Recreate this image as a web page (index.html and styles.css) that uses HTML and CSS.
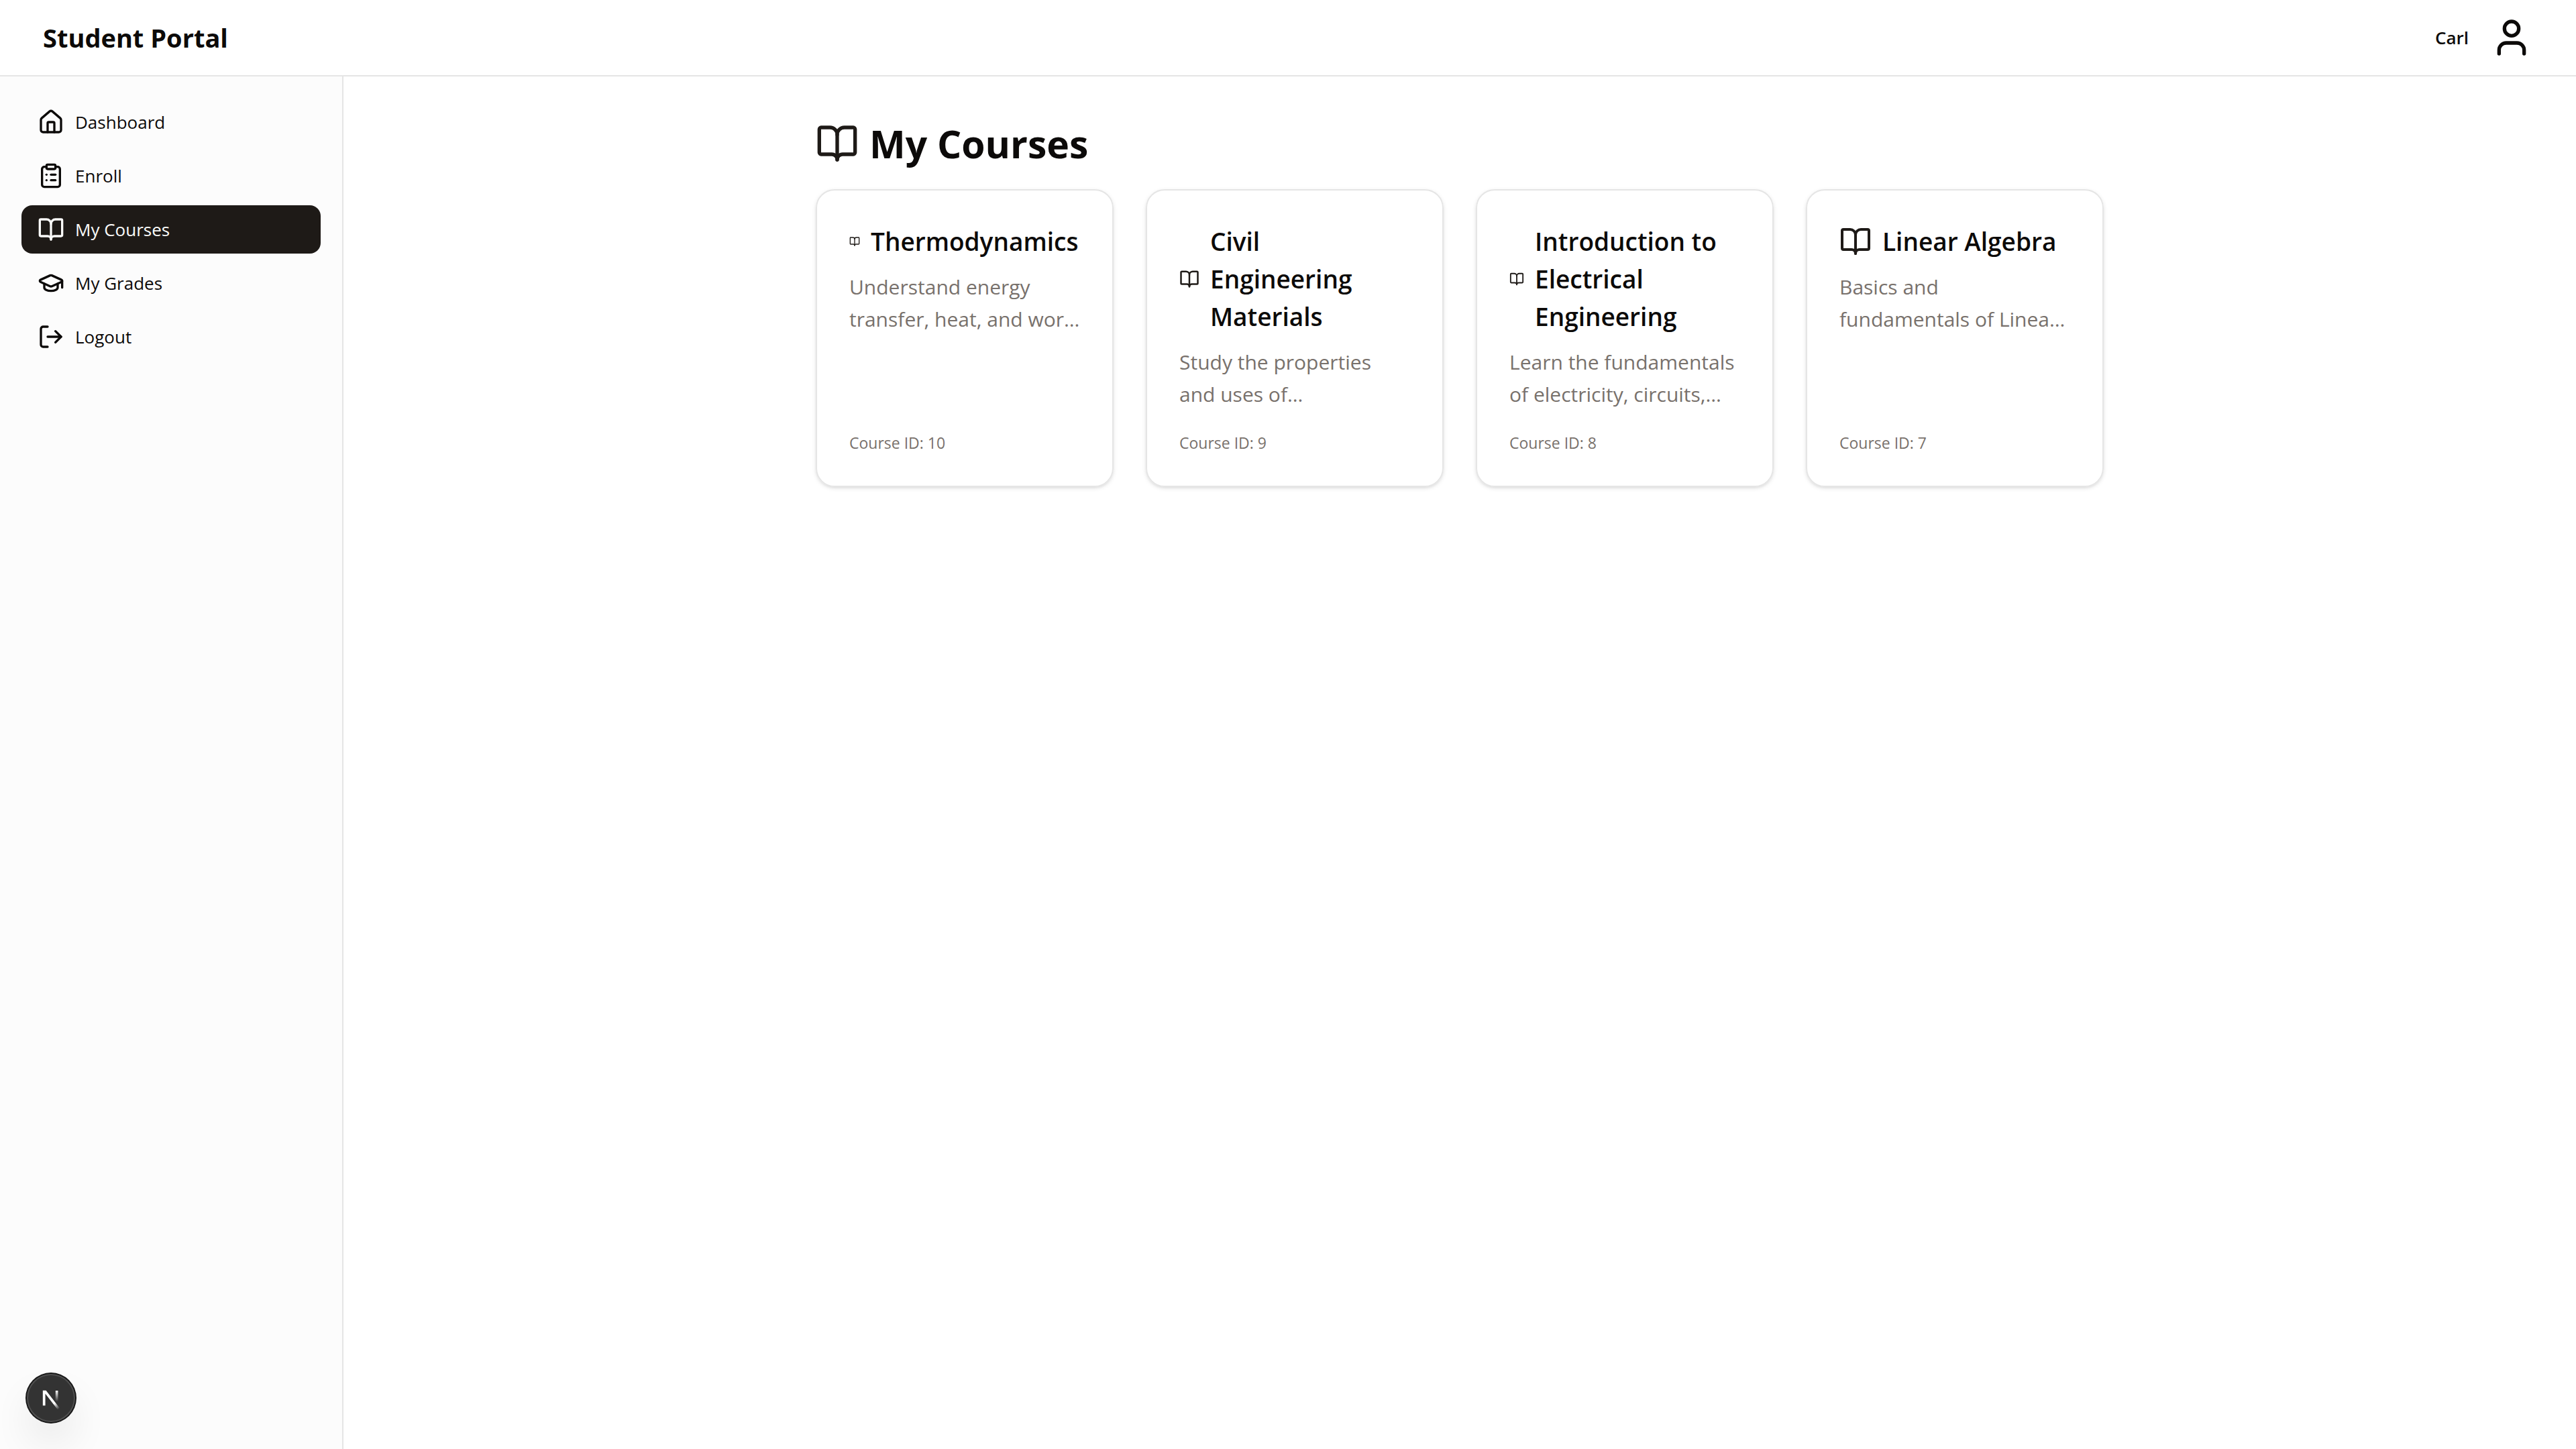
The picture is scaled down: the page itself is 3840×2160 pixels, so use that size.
FILE: index.html
```html
<!DOCTYPE html>
<html lang="en">
<head>
<meta charset="utf-8">
<meta name="viewport" content="width=device-width, initial-scale=1">
<title>Student Portal</title>
<link rel="stylesheet" href="styles.css">
</head>
<body>
<svg class="sprite" aria-hidden="true">
  <symbol id="book-open" viewBox="0 0 24 24"><path d="M12 7v14"/><path d="M3 18a1 1 0 0 1-1-1V4a1 1 0 0 1 1-1h5a4 4 0 0 1 4 4 4 4 0 0 1 4-4h5a1 1 0 0 1 1 1v13a1 1 0 0 1-1 1h-6a3 3 0 0 0-3 3 3 3 0 0 0-3-3z"/></symbol>
  <symbol id="house" viewBox="0 0 24 24"><path d="M15 21v-8a1 1 0 0 0-1-1h-4a1 1 0 0 0-1 1v8"/><path d="M3 10a2 2 0 0 1 .709-1.528l7-5.999a2 2 0 0 1 2.582 0l7 5.999A2 2 0 0 1 21 10v9a2 2 0 0 1-2 2H5a2 2 0 0 1-2-2z"/></symbol>
  <symbol id="clipboard-list" viewBox="0 0 24 24"><rect width="8" height="4" x="8" y="2" rx="1" ry="1"/><path d="M16 4h2a2 2 0 0 1 2 2v14a2 2 0 0 1-2 2H6a2 2 0 0 1-2-2V6a2 2 0 0 1 2-2h2"/><path d="M12 11h4"/><path d="M12 16h4"/><path d="M8 11h.01"/><path d="M8 16h.01"/></symbol>
  <symbol id="graduation-cap" viewBox="0 0 24 24"><path d="M21.42 10.922a1 1 0 0 0-.019-1.838L12.83 5.18a2 2 0 0 0-1.66 0L2.6 9.08a1 1 0 0 0 0 1.832l8.57 3.908a2 2 0 0 0 1.66 0z"/><path d="M22 10v6"/><path d="M6 12.5V16a6 3 0 0 0 12 0v-3.5"/></symbol>
  <symbol id="log-out" viewBox="0 0 24 24"><path d="M9 21H5a2 2 0 0 1-2-2V5a2 2 0 0 1 2-2h4"/><path d="m16 17 5-5-5-5"/><path d="M21 12H9"/></symbol>
  <symbol id="user" viewBox="0 0 24 24"><path d="M19 21v-2a4 4 0 0 0-4-4H9a4 4 0 0 0-4 4v2"/><circle cx="12" cy="7" r="4"/></symbol>
</svg>

<header class="topbar">
  <div class="brand">Student Portal</div>
  <div class="account">
    <span class="account-name">Carl</span>
    <svg class="icon icon-xl" aria-hidden="true"><use href="#user"/></svg>
  </div>
</header>

<div class="shell">
  <nav class="sidebar" aria-label="Main">
    <a class="nav-link" href="#dashboard"><svg class="icon icon-md" aria-hidden="true"><use href="#house"/></svg>Dashboard</a>
    <a class="nav-link" href="#enroll"><svg class="icon icon-md" aria-hidden="true"><use href="#clipboard-list"/></svg>Enroll</a>
    <a class="nav-link active" href="#courses" aria-current="page"><svg class="icon icon-md" aria-hidden="true"><use href="#book-open"/></svg>My Courses</a>
    <a class="nav-link" href="#grades"><svg class="icon icon-md" aria-hidden="true"><use href="#graduation-cap"/></svg>My Grades</a>
    <a class="nav-link" href="#logout"><svg class="icon icon-md" aria-hidden="true"><use href="#log-out"/></svg>Logout</a>
  </nav>

  <main class="content">
    <div class="container">
      <h1 class="page-title"><svg class="icon icon-xl" aria-hidden="true"><use href="#book-open"/></svg>My Courses</h1>
      <div class="course-grid">
        <article class="card">
          <h2 class="card-title"><svg class="icon icon-2xs" aria-hidden="true"><use href="#book-open"/></svg><span>Thermodynamics</span></h2>
          <p class="card-text">Understand energy<br>transfer, heat, and wor…</p>
          <p class="card-id">Course ID: 10</p>
        </article>
        <article class="card">
          <h2 class="card-title"><svg class="icon icon-sm" aria-hidden="true"><use href="#book-open"/></svg><span>Civil<br>Engineering Materials</span></h2>
          <p class="card-text">Study the properties<br>and uses of…</p>
          <p class="card-id">Course ID: 9</p>
        </article>
        <article class="card">
          <h2 class="card-title"><svg class="icon icon-xs" aria-hidden="true"><use href="#book-open"/></svg><span>Introduction to Electrical Engineering</span></h2>
          <p class="card-text">Learn the fundamentals<br>of electricity, circuits,…</p>
          <p class="card-id">Course ID: 8</p>
        </article>
        <article class="card">
          <h2 class="card-title"><svg class="icon icon-lg" aria-hidden="true"><use href="#book-open"/></svg><span>Linear Algebra</span></h2>
          <p class="card-text">Basics and<br>fundamentals of Linea…</p>
          <p class="card-id">Course ID: 7</p>
        </article>
      </div>
    </div>
  </main>
</div>

<button class="dev-badge" type="button" aria-label="Open developer tools">
  <svg class="dev-mark" viewBox="0 0 40 40" fill="none" aria-hidden="true">
    <defs>
      <linearGradient id="diagonal-fade" gradientUnits="userSpaceOnUse" x1="9.956" y1="11.123" x2="15.478" y2="17.967"><stop stop-color="#fff"/><stop offset=".604" stop-color="#fff" stop-opacity="0"/><stop offset="1" stop-color="#fff" stop-opacity="0"/></linearGradient>
      <linearGradient id="stem-fade" gradientUnits="userSpaceOnUse" x1="11.822" y1="1.4" x2="11.791" y2="9.625"><stop stop-color="#fff"/><stop offset="1" stop-color="#fff" stop-opacity="0"/></linearGradient>
      <clipPath id="mark-clip"><rect x="0" y="1.4" width="16" height="16"/></clipPath>
    </defs>
    <g transform="translate(12.5 13)" stroke-width="1.86">
      <path d="M13.3 15.2 2.34 1v11.6" stroke="url(#diagonal-fade)" clip-path="url(#mark-clip)"/>
      <path d="M11.825 1.5v11.6" stroke="url(#stem-fade)"/>
    </g>
  </svg>
</button>
</body>
</html>
```
FILE: styles.css
```css
:root {
  --foreground: #0c0a09;
  --primary: #1e1a17;
  --primary-foreground: #fafaf9;
  --muted: #78716c;
  --border: #e5e5e5;
  --sidebar: #fcfcfc;
}

* { box-sizing: border-box; }

body {
  margin: 0;
  min-height: 100vh;
  display: flex;
  flex-direction: column;
  background: #fff;
  color: var(--foreground);
  font-family: "Open Sans", "Noto Sans", sans-serif;
  font-size: 26px;
  line-height: 40px;
}

h1, h2, p { margin: 0; }

.sprite { display: none; }

.icon {
  flex: none;
  fill: none;
  stroke: currentColor;
  stroke-width: 2;
  stroke-linecap: round;
  stroke-linejoin: round;
}
.icon-2xs { width: 16px; height: 16px; }
.icon-xs { width: 22px; height: 22px; }
.icon-sm { width: 30px; height: 30px; }
.icon-md { width: 40px; height: 40px; }
.icon-lg { width: 48px; height: 48px; }
.icon-xl { width: 64px; height: 64px; }

.topbar {
  display: flex;
  align-items: center;
  justify-content: space-between;
  padding: 24px 64px;
  border-bottom: 2px solid var(--border);
}
.brand {
  font-size: 38px;
  font-weight: 700;
  line-height: 56px;
}
.account {
  display: flex;
  align-items: center;
  gap: 32px;
}
.account-name { font-weight: 600; }

.shell {
  flex: 1;
  display: flex;
}

.sidebar {
  width: 512px;
  flex: none;
  display: flex;
  flex-direction: column;
  gap: 8px;
  padding: 32px;
  background: var(--sidebar);
  border-right: 2px solid var(--border);
}
.nav-link {
  display: flex;
  align-items: center;
  gap: 16px;
  padding: 16px 24px;
  border-radius: 16px;
  color: inherit;
  text-decoration: none;
}
.nav-link.active {
  background: var(--primary);
  color: var(--primary-foreground);
}

.content {
  flex: 1;
  padding: 64px;
}
.container {
  max-width: 1920px;
  margin: 0 auto;
}
.page-title {
  display: flex;
  align-items: center;
  gap: 16px;
  margin-bottom: 32px;
  font-size: 57px;
  font-weight: 700;
  line-height: 72px;
}
.page-title .icon,
.card-title .icon { color: var(--primary); }

.course-grid {
  display: grid;
  grid-template-columns: repeat(4, minmax(0, 1fr));
  gap: 48px;
}
.card {
  aspect-ratio: 1;
  display: flex;
  flex-direction: column;
  padding: 48px;
  border: 2px solid var(--border);
  border-radius: 28px;
  box-shadow: 0 2px 6px rgb(0 0 0 / 0.1), 0 2px 4px -2px rgb(0 0 0 / 0.1);
}
.card-title {
  display: flex;
  align-items: center;
  gap: 16px;
  font-size: 37px;
  font-weight: 600;
  line-height: 56px;
}
.card-text {
  margin-top: 16px;
  color: var(--muted);
  font-size: 30px;
  line-height: 48px;
}
.card-id {
  margin-top: auto;
  color: var(--muted);
  font-size: 23px;
  line-height: 32px;
}

.dev-badge {
  position: fixed;
  left: 40px;
  bottom: 40px;
  width: 72px;
  height: 72px;
  display: flex;
  align-items: center;
  justify-content: center;
  padding: 0;
  border: 0;
  border-radius: 50%;
  background: #333;
  box-shadow: 0 0 0 2px #171717, inset 0 0 0 2px rgb(255 255 255 / 0.14), 0 32px 64px -16px rgb(0 0 0 / 0.24);
}
.dev-mark {
  flex: none;
  width: 80px;
  height: 80px;
}
```
